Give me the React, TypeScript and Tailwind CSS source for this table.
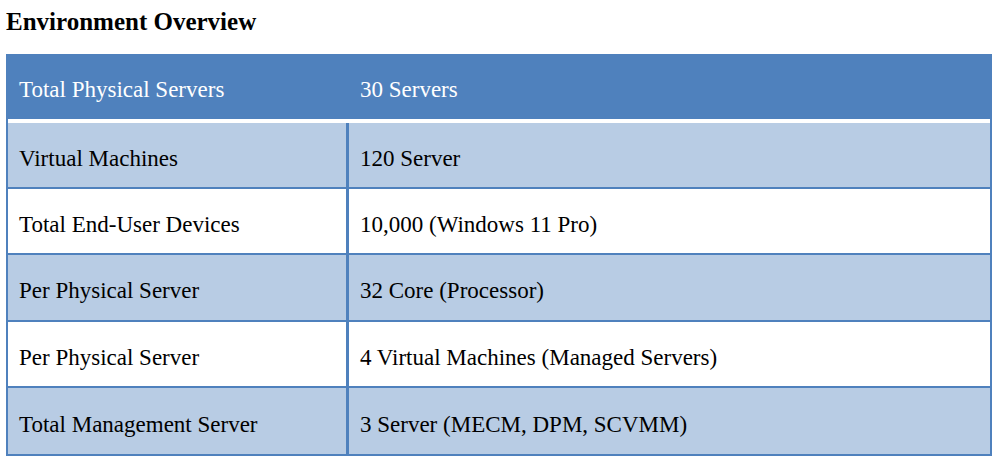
import React from "react";

const rows: { a: string; b: string; shade: boolean; h: string }[] = [
  { a: "Virtual Machines", b: "120 Server", shade: true, h: "h-[64px]" },
  { a: "Total End-User Devices", b: "10,000 (Windows 11 Pro)", shade: false, h: "h-[64px]" },
  { a: "Per Physical Server", b: "32 Core (Processor)", shade: true, h: "h-[65px]" },
  { a: "Per Physical Server", b: "4 Virtual Machines (Managed Servers)", shade: false, h: "h-[64px]" },
  { a: "Total Management Server", b: "3 Server (MECM, DPM, SCVMM)", shade: true, h: "h-[66px]" },
];

export default function App() {
  return (
    <div
      className="w-[998px] h-[464px] bg-white text-black"
      style={{ fontFamily: '"Liberation Serif", "Times New Roman", serif' }}
    >
      <div className="pl-[6px] pt-[7px] h-[54px]">
        <h1 className="text-[25px] font-bold leading-[29px]">Environment Overview</h1>
      </div>
      <div className="ml-[6px] w-[986px] border-2 border-[#4f81bd] flex flex-col">
        <div className="h-[63px] bg-[#4f81bd] text-white text-[23px] flex items-center border-b-4 border-white box-content">
          <div className="w-[341px] pl-[11px] pt-[5px]">Total Physical Servers</div>
          <div className="pl-[11px] pt-[5px]">30 Servers</div>
        </div>
        {rows.map((r, i) => (
          <div
            key={i}
            className={`${r.h} flex text-[23px] box-content ${r.shade ? "bg-[#b8cce4]" : "bg-white"} ${i < rows.length - 1 ? "border-b-2 border-[#4f81bd]" : ""}`}
          >
            <div className="w-[341px] pl-[11px] pt-[8px] flex items-center border-r-[3px] border-[#4f81bd]">
              {r.a}
            </div>
            <div className="pl-[11px] pt-[8px] flex items-center">{r.b}</div>
          </div>
        ))}
      </div>
    </div>
  );
}
